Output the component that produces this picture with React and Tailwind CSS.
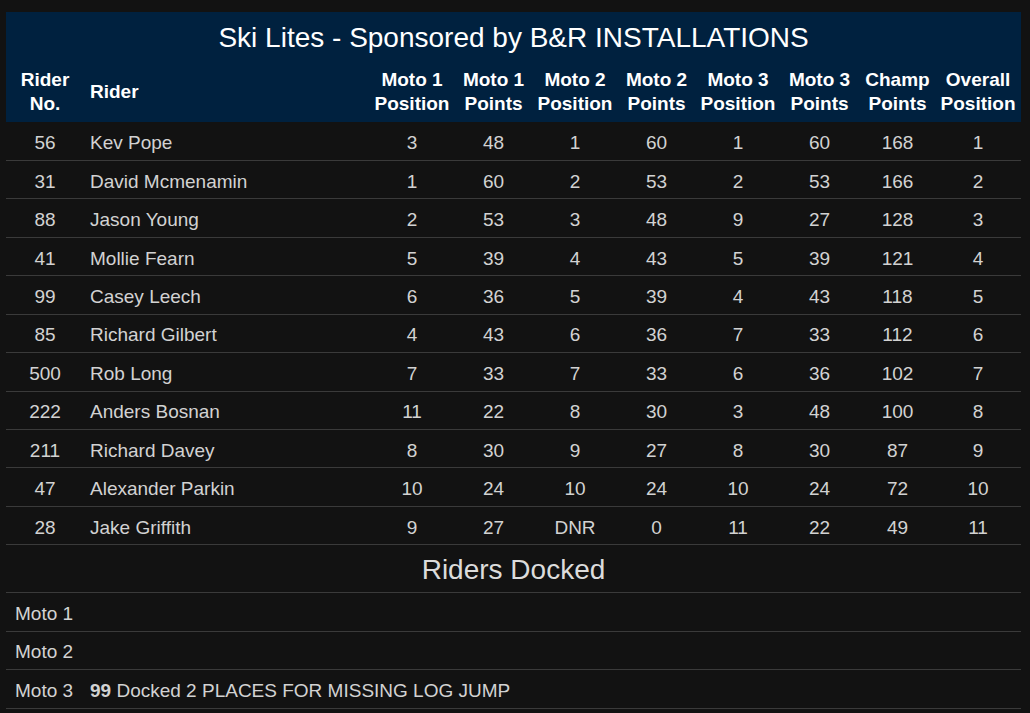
const riders = [
  ["56", "Kev Pope", "3", "48", "1", "60", "1", "60", "168", "1"],
  ["31", "David Mcmenamin", "1", "60", "2", "53", "2", "53", "166", "2"],
  ["88", "Jason Young", "2", "53", "3", "48", "9", "27", "128", "3"],
  ["41", "Mollie Fearn", "5", "39", "4", "43", "5", "39", "121", "4"],
  ["99", "Casey Leech", "6", "36", "5", "39", "4", "43", "118", "5"],
  ["85", "Richard Gilbert", "4", "43", "6", "36", "7", "33", "112", "6"],
  ["500", "Rob Long", "7", "33", "7", "33", "6", "36", "102", "7"],
  ["222", "Anders Bosnan", "11", "22", "8", "30", "3", "48", "100", "8"],
  ["211", "Richard Davey", "8", "30", "9", "27", "8", "30", "87", "9"],
  ["47", "Alexander Parkin", "10", "24", "10", "24", "10", "24", "72", "10"],
  ["28", "Jake Griffith", "9", "27", "DNR", "0", "11", "22", "49", "11"],
];

const headers = [
  ["Moto 1", "Position"],
  ["Moto 1", "Points"],
  ["Moto 2", "Position"],
  ["Moto 2", "Points"],
  ["Moto 3", "Position"],
  ["Moto 3", "Points"],
  ["Champ", "Points"],
  ["Overall", "Position"],
];

const widths = [
  "w-[78px]",
  "w-[287px]",
  "w-[82px]",
  "w-[81px]",
  "w-[82px]",
  "w-[81px]",
  "w-[82px]",
  "w-[81px]",
  "w-[75px]",
  "w-[86px]",
];

const docked = [
  { moto: "Moto 1", note: null },
  { moto: "Moto 2", note: null },
  { moto: "Moto 3", note: { rider: "99", text: "Docked 2 PLACES FOR MISSING LOG JUMP" } },
];

export default function App() {
  return (
    <div className="min-h-[713px] bg-[#121212] pt-[12px] pl-[6px] font-['Liberation_Sans',Arial,sans-serif]">
      <div className="w-[1015px]">
        <table className="w-full table-fixed border-collapse">
          <colgroup>
            {widths.map((w, i) => (
              <col key={i} className={w} />
            ))}
          </colgroup>
          <thead className="bg-[#00213f] text-white">
            <tr>
              <th colSpan={10} className="h-[50px] pt-[2px] text-[28px] font-normal leading-[34px]">
                Ski Lites - Sponsored by B&amp;R INSTALLATIONS
              </th>
            </tr>
            <tr className="text-[19px] font-bold leading-[24px]">
              <th className="h-[60px] text-center">
                Rider
                <br />
                No.
              </th>
              <th className="pl-[6px] text-left">Rider</th>
              {headers.map(([a, b], i) => (
                <th key={i} className="text-center whitespace-nowrap">
                  {a}
                  <br />
                  {b}
                </th>
              ))}
            </tr>
          </thead>
          <tbody className="text-[19px] text-[#d2d2d2]">
            {riders.map((r) => (
              <tr key={r[0]} className="border-b border-[#3a3a3a]">
                {r.map((cell, i) => (
                  <td
                    key={i}
                    className={
                      i === 1
                        ? "h-[38.45px] pt-[3px] pl-[6px] text-left leading-[25px]"
                        : "h-[38.45px] pt-[3px] text-center leading-[25px]"
                    }
                  >
                    {cell}
                  </td>
                ))}
              </tr>
            ))}
          </tbody>
        </table>

        {/* Riders docked */}
        <div className="flex h-[48px] items-center justify-center border-b border-[#3a3a3a] pt-[2px] text-[28px] text-[#dcdcdc]">
          Riders Docked
        </div>
        {docked.map((d) => (
          <div
            key={d.moto}
            className="flex h-[38.5px] items-center border-b border-[#3a3a3a] pt-[4px] text-[19px] text-[#d2d2d2]"
          >
            <div className="w-[84px] pl-[9px]">{d.moto}</div>
            <div>
              {d.note && (
                <>
                  <span className="font-bold">{d.note.rider}</span> {d.note.text}
                </>
              )}
            </div>
          </div>
        ))}
      </div>
    </div>
  );
}
